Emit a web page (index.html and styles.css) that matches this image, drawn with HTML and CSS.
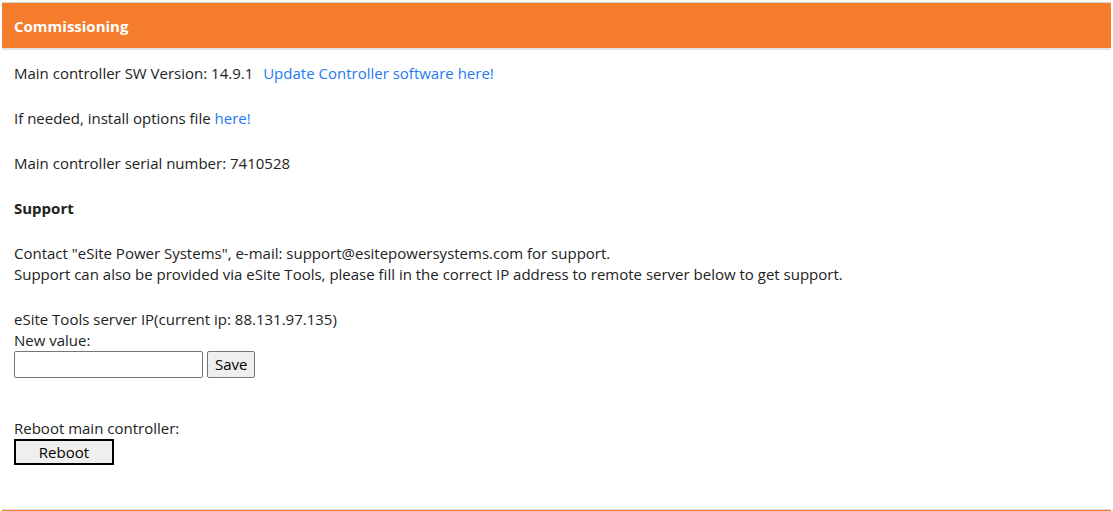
FILE: index.html
```html
<!DOCTYPE html>
<html lang="en">
<head>
  <meta charset="UTF-8">
  <title>Commissioning</title>
  <link rel="stylesheet" href="styles.css">
</head>
<body>

  <!-- Commissioning panel -->
  <div class="panel">
    <div class="panel-header">Commissioning</div>
    <div class="panel-body">
      <p>Main controller SW Version: 14.9.1 <a href="#" class="update-link">Update Controller software here!</a></p>
      <p>If needed, install options file <a href="#">here!</a></p>
      <p>Main controller serial number: 7410528</p>
      <p class="section-title">Support</p>
      <p>Contact "eSite Power Systems", e-mail: support@esitepowersystems.com for support.<br>
        Support can also be provided via eSite Tools, please fill in the correct IP address to remote server below to get support.</p>

      <form class="ip-form">
        <div>eSite Tools server IP(current ip: 88.131.97.135)</div>
        <label for="server-ip">New value:</label>
        <div class="ip-row">
          <input type="text" id="server-ip">
          <button type="submit" class="save-btn">Save</button>
        </div>
      </form>

      <div class="reboot">
        <div>Reboot main controller:</div>
        <button type="button" class="reboot-btn">Reboot</button>
      </div>
    </div>
  </div>

</body>
</html>
```

FILE: styles.css
```css
* { margin: 0; padding: 0; box-sizing: border-box; }
body {
  font-family: "Open Sans", "Noto Sans", sans-serif;
  font-size: 15px;
  line-height: 21px;
  color: #222;
  background: #fff;
  padding: 2px 2px 0;
}
.panel {
  border-bottom: 2px solid #f47c2b;
}
.panel-header {
  background: #f47c2b;
  color: #fff;
  font-weight: bold;
  height: 48px;
  padding: 13px 12px 0;
  border-top: 1px solid #d4d4d4;
  border-bottom: 2px solid #e2e2e2;
}
.panel-body {
  padding: 13px 12px 44px;
  border-bottom: 1px solid #ddd;
}
p { margin-bottom: 24px; }
.section-title { font-weight: bold; }
a { color: #1f7bf0; text-decoration: none; }
.update-link { margin-left: 6px; }
.ip-form { margin-top: 24px; }
label { display: block; }
.ip-row { display: flex; gap: 4px; }
input {
  width: 189px; height: 27px;
  border: 1px solid #767676; border-radius: 2px;
  padding: 0 4px;
}
.save-btn {
  height: 27px; padding: 0 7px;
  font: inherit;
  background: #efefef;
  border: 1px solid #767676; border-radius: 2px;
}
.reboot { margin-top: 40px; }
.reboot-btn {
  width: 100px; height: 26px;
  font: inherit;
  background: #efefef;
  border: 2px solid #000;
}
```
